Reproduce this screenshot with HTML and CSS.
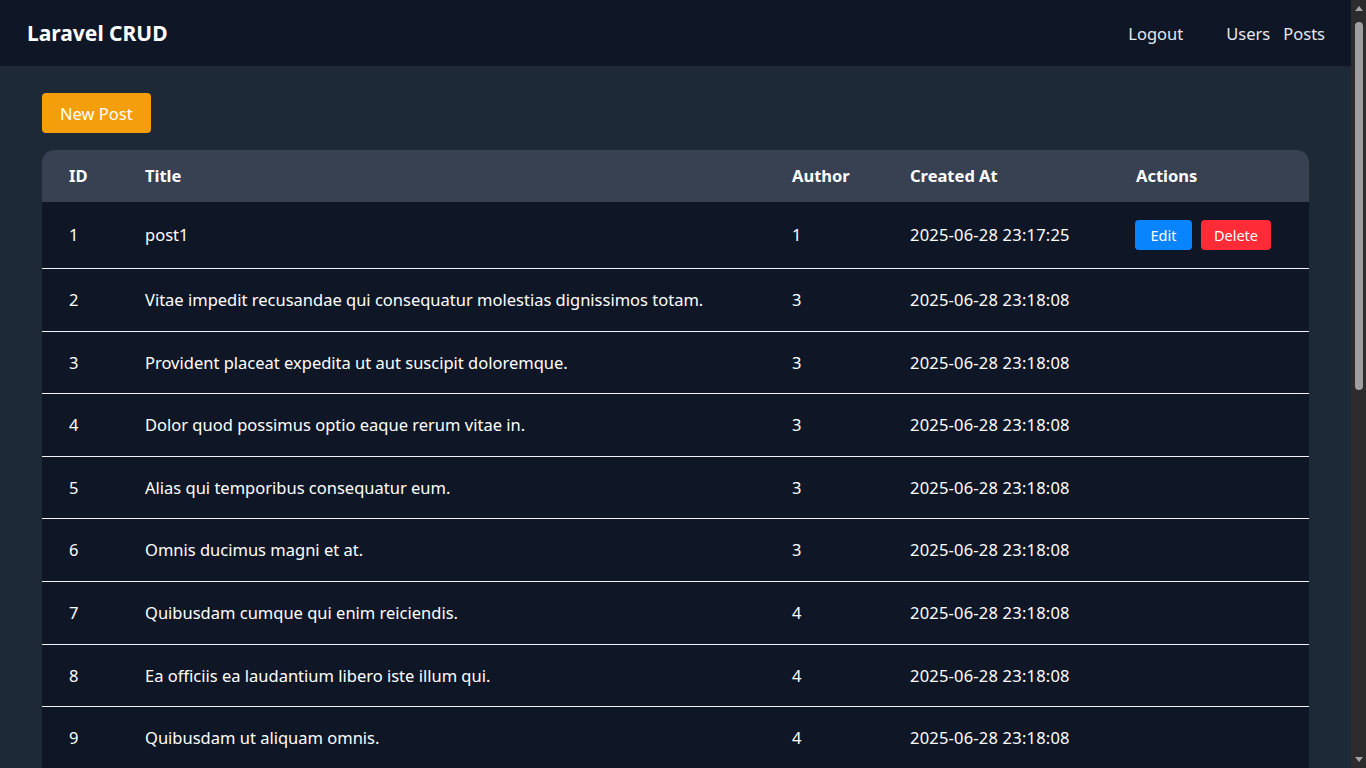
FILE: index.html
```html
<!DOCTYPE html>
<html lang="en">
<head>
<meta charset="utf-8">
<title>Laravel CRUD</title>
<link rel="stylesheet" href="styles.css">
</head>
<body>
<div class="app">
  <nav class="navbar">
    <a class="brand" href="#">Laravel CRUD</a>
    <div class="nav-links">
      <a class="nav-link logout" href="#">Logout</a>
      <a class="nav-link" href="#">Users</a>
      <a class="nav-link" href="#">Posts</a>
    </div>
  </nav>
  <main class="container">
    <a class="btn btn-new" href="#">New Post</a>
    <table class="posts">
      <colgroup>
        <col class="c-id"><col class="c-title"><col class="c-author"><col class="c-date"><col class="c-actions">
      </colgroup>
      <thead>
        <tr><th>ID</th><th>Title</th><th>Author</th><th>Created At</th><th>Actions</th></tr>
      </thead>
      <tbody>
        <tr class="first"><td>1</td><td>post1</td><td>1</td><td class="date">2025-06-28 23:17:25</td><td><div class="actions"><a class="btn-sm btn-edit" href="#">Edit</a><a class="btn-sm btn-delete" href="#">Delete</a></div></td></tr>
        <tr><td>2</td><td>Vitae impedit recusandae qui consequatur molestias dignissimos totam.</td><td>3</td><td class="date">2025-06-28 23:18:08</td><td></td></tr>
        <tr><td>3</td><td>Provident placeat expedita ut aut suscipit doloremque.</td><td>3</td><td class="date">2025-06-28 23:18:08</td><td></td></tr>
        <tr><td>4</td><td>Dolor quod possimus optio eaque rerum vitae in.</td><td>3</td><td class="date">2025-06-28 23:18:08</td><td></td></tr>
        <tr><td>5</td><td>Alias qui temporibus consequatur eum.</td><td>3</td><td class="date">2025-06-28 23:18:08</td><td></td></tr>
        <tr><td>6</td><td>Omnis ducimus magni et at.</td><td>3</td><td class="date">2025-06-28 23:18:08</td><td></td></tr>
        <tr><td>7</td><td>Quibusdam cumque qui enim reiciendis.</td><td>4</td><td class="date">2025-06-28 23:18:08</td><td></td></tr>
        <tr><td>8</td><td>Ea officiis ea laudantium libero iste illum qui.</td><td>4</td><td class="date">2025-06-28 23:18:08</td><td></td></tr>
        <tr><td>9</td><td>Quibusdam ut aliquam omnis.</td><td>4</td><td class="date">2025-06-28 23:18:08</td><td></td></tr>
      </tbody>
    </table>
  </main>
</div>
<div class="scrollbar" aria-hidden="true">
  <span class="sb-arrow sb-up"></span>
  <div class="sb-track"><div class="sb-thumb"></div></div>
  <span class="sb-arrow sb-down"></span>
</div>
</body>
</html>
```
FILE: styles.css
```css
html, body {
  height: 100%;
}
body {
  margin: 0;
  display: flex;
  overflow: hidden;
  background: #1e2937;
  color: #ffffff;
  font-family: "Noto Sans", "Open Sans", sans-serif;
  font-size: 16.5px;
}
a {
  color: inherit;
  text-decoration: none;
}
.app {
  flex: 1;
  min-width: 0;
  height: 100%;
  overflow: hidden;
}
.navbar {
  height: 66px;
  background: #0f1727;
  display: flex;
  align-items: center;
  justify-content: space-between;
  padding: 0 26px 0 27px;
  box-sizing: border-box;
}
.brand {
  font-weight: 700;
  font-size: 21px;
  color: #ffffff;
}
.nav-links {
  display: flex;
  align-items: center;
  gap: 13px;
}
.nav-link {
  font-size: 16.5px;
  color: #e5e7eb;
}
.logout {
  margin-right: 30px;
}
.container {
  padding: 27px 42px 42px;
}
.btn {
  display: inline-flex;
  align-items: center;
  justify-content: center;
  height: 40px;
  box-sizing: border-box;
  padding: 0 18px;
  border-radius: 4px;
  font-size: 16.5px;
}
.btn-new {
  background: #f59e0b;
  color: #ffffff;
  margin-bottom: 17px;
}
.posts {
  width: 100%;
  table-layout: fixed;
  border-collapse: separate;
  border-spacing: 0;
  background: #0f1727;
  border-radius: 12px 12px 0 0;
  overflow: hidden;
}
.c-id { width: 76px; }
.c-title { width: 647px; }
.c-author { width: 118px; }
.c-date { width: 226px; }
.c-actions { width: 200px; }
.posts thead tr {
  background: #374151;
}
.posts th {
  text-align: left;
  font-weight: 700;
  font-size: 16.5px;
  padding: 0 0 2px 27px;
  height: 52px;
  box-sizing: border-box;
}
.posts td {
  padding: 18px 0 18px 27px;
  line-height: 25.6px;
  border-bottom: 1px solid #f1f3f6;
  white-space: nowrap;
  vertical-align: middle;
}
.posts td.date {
  letter-spacing: 0.2px;
}
.posts tr.first td {
  line-height: 30px;
}
.actions {
  display: flex;
  gap: 9px;
  margin-left: -1px;
}
.btn-sm {
  display: inline-flex;
  align-items: center;
  justify-content: center;
  height: 30px;
  box-sizing: border-box;
  border-radius: 4px;
  font-size: 14.5px;
  color: #ffffff;
}
.btn-edit {
  background: #0984ff;
  width: 57px;
}
.btn-delete {
  background: #ff2b37;
  width: 70px;
}
.scrollbar {
  width: 15px;
  flex: none;
  height: 100%;
  background: #2c2c2c;
  display: flex;
  flex-direction: column;
  align-items: center;
}
.sb-arrow {
  height: 17px;
  width: 15px;
  display: flex;
  align-items: center;
  justify-content: center;
}
.sb-arrow::before {
  content: "";
  width: 0;
  height: 0;
  border-left: 4.5px solid transparent;
  border-right: 4.5px solid transparent;
}
.sb-up::before {
  border-bottom: 5px solid #a3a3a3;
}
.sb-down::before {
  border-top: 5px solid #a3a3a3;
}
.sb-track {
  flex: 1;
  width: 100%;
  display: flex;
  justify-content: center;
  padding-top: 5px;
  box-sizing: border-box;
}
.sb-thumb {
  width: 8px;
  height: 368px;
  border-radius: 4px;
  background: #9f9f9f;
}
```
